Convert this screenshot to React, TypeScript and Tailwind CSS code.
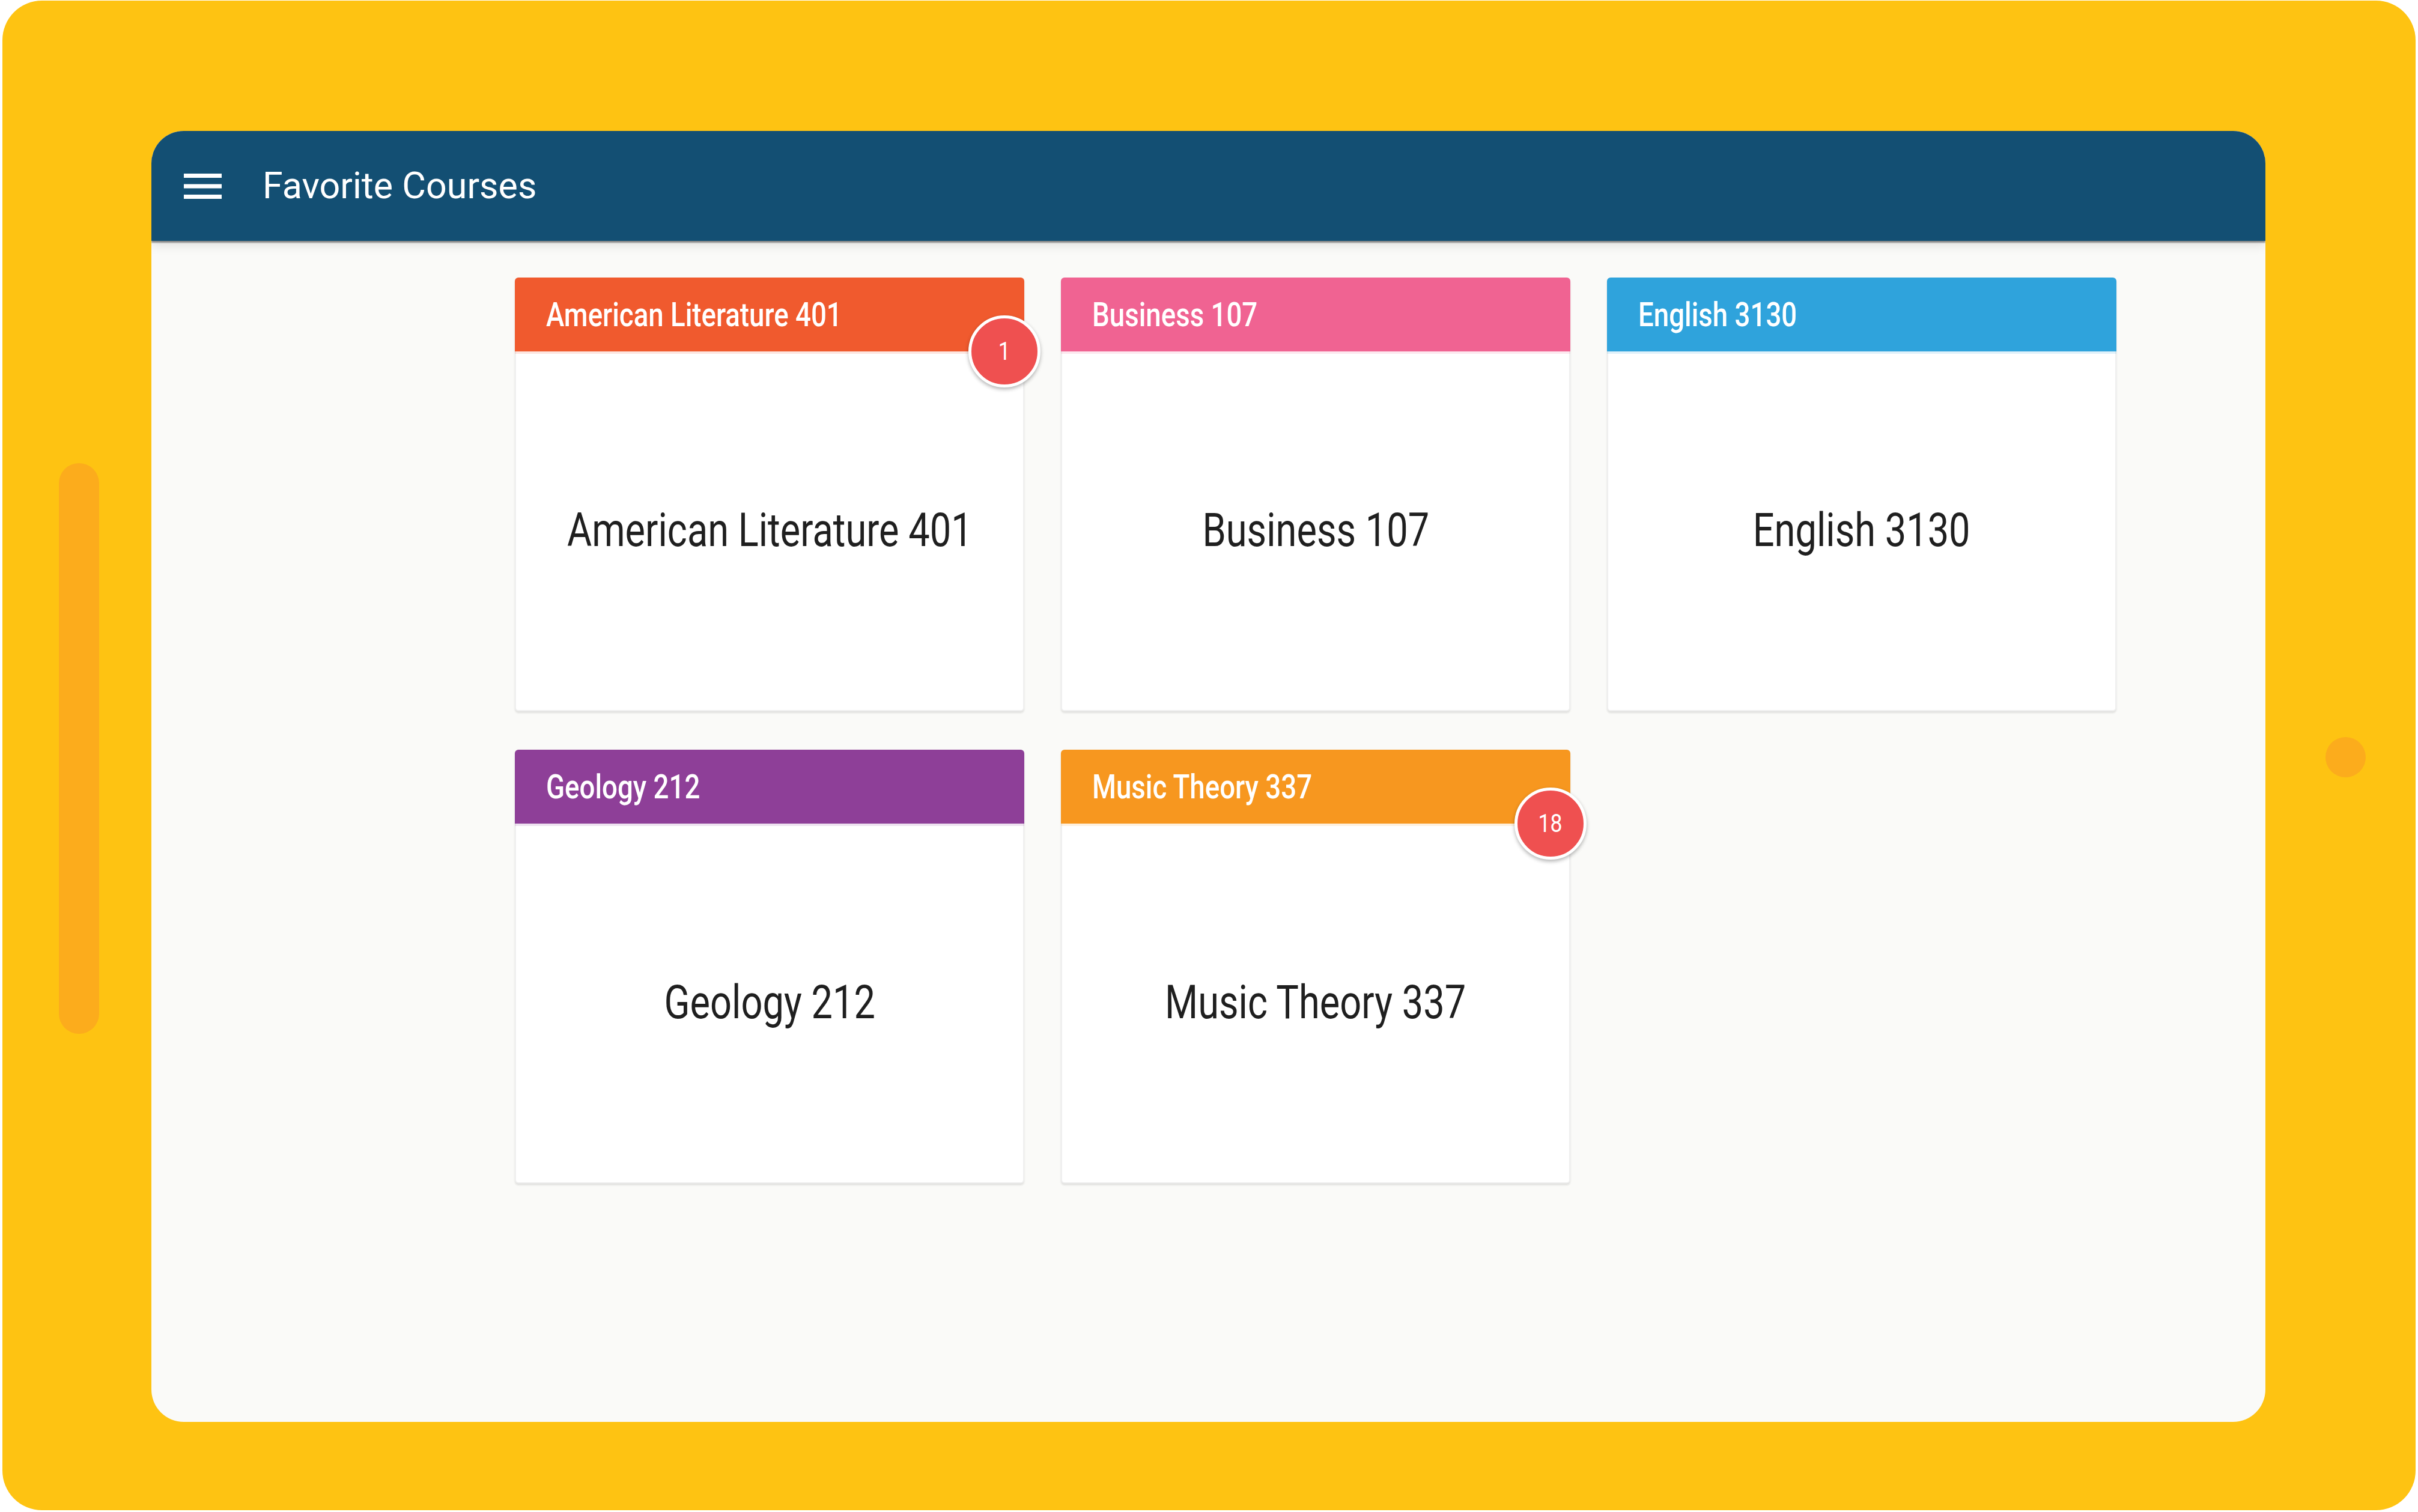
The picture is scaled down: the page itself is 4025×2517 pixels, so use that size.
const COURSES: { title: string; color: string; tint: string; badge?: string }[] = [
  { title: "American Literature 401", color: "bg-[#F05A2E]", tint: "shadow-[0_4px_0_rgba(240,90,46,0.15)]", badge: "1" },
  { title: "Business 107", color: "bg-[#F06392]", tint: "shadow-[0_4px_0_rgba(240,99,146,0.15)]" },
  { title: "English 3130", color: "bg-[#2FA3DC]", tint: "shadow-[0_4px_0_rgba(47,163,220,0.15)]" },
  { title: "Geology 212", color: "bg-[#8E3F98]", tint: "shadow-[0_4px_0_rgba(142,63,152,0.15)]" },
  { title: "Music Theory 337", color: "bg-[#F7971F]", tint: "shadow-[0_4px_0_rgba(247,151,31,0.15)]", badge: "18" },
];

const font = "font-['Roboto',_'Liberation_Sans',_sans-serif]";

function CourseCard({ title, color, tint, badge }: (typeof COURSES)[number]) {
  return (
    <div className="relative h-[722px] flex flex-col rounded-[6px] bg-white border-2 border-[#efefef] shadow-[0_3px_3px_rgba(0,0,0,0.1)]">
      <div className={`${color} ${tint} -mx-[2px] -mt-[2px] h-[123px] flex items-center pl-[52px] rounded-t-[6px]`}>
        <span className="inline-block origin-left scale-x-[0.815] text-[56px] font-medium leading-none text-white">{title}</span>
      </div>
      <div className="flex-1 flex items-center justify-center">
        <span className="inline-block scale-x-[0.82] text-[77px] leading-none text-[#1f1f1f]">{title}</span>
      </div>
      {badge && (
        <div className="absolute top-[61px] right-[-29px] w-[120px] h-[120px] rounded-full border-[5px] border-white bg-[#EF5050] shadow-[0_3px_6px_rgba(0,0,0,0.3)] flex items-center justify-center">
          <span className="inline-block scale-x-[0.85] text-[42px] leading-none text-white">{badge}</span>
        </div>
      )}
    </div>
  );
}

export default function App() {
  return (
    <div className={`w-[4025px] h-[2517px] bg-white pt-[1px] pl-[4px] ${font}`}>
      <div className="w-[4017px] h-[2513px] rounded-[66px] bg-[#FEC312] flex">
        {/* left side button */}
        <div className="w-[248px] flex items-center justify-center pl-[7px] pb-[24px]">
          <div className="w-[67px] h-[950px] rounded-full bg-[#FCAC1C]" />
        </div>

        <div className="flex-1 flex flex-col pt-[217px] pb-[147px]">
          <div className="flex-1 flex flex-col rounded-[54px] overflow-hidden bg-[#FAFAF8]">
            <div className="relative z-10 h-[183px] flex items-center pl-[54px] bg-[#134F73] shadow-[0_3px_2px_rgba(0,0,0,0.4),0_8px_16px_rgba(0,0,0,0.1)]">
              <svg className="w-[63px] h-[42px]" viewBox="3 6 18 12" fill="white">
                <path d="M3 18h18v-2H3v2zm0-5h18v-2H3v2zm0-7v2h18V6H3z" />
              </svg>
              <span className="ml-[68px] text-[61px] leading-none text-white">Favorite Courses</span>
            </div>

            <div className="pt-[61px] pl-[605px]">
              <div className="grid grid-cols-[repeat(3,848px)] gap-x-[61px] gap-y-[64px]">
                {COURSES.map((c) => (
                  <CourseCard key={c.title} {...c} />
                ))}
              </div>
            </div>
          </div>
        </div>

        {/* right camera dot */}
        <div className="w-[250px] flex items-center justify-center pl-[16px] pt-[6px]">
          <div className="w-[67px] h-[67px] rounded-full bg-[#FCAC1C]" />
        </div>
      </div>
    </div>
  );
}
